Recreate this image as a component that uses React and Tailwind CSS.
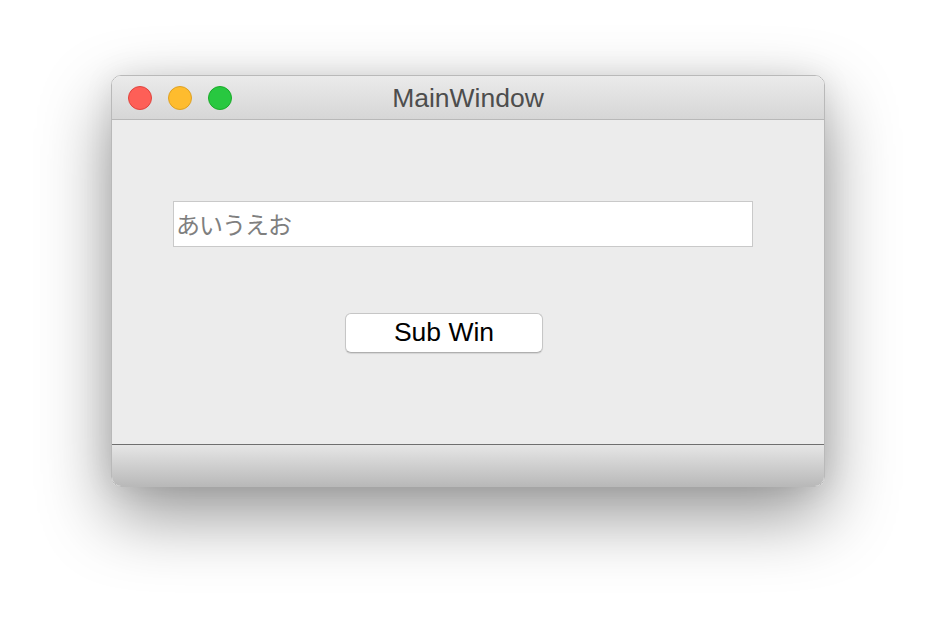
import React from "react";

export default function App() {
  return (
    <div className="w-[936px] h-[634px] bg-white overflow-hidden pt-[75px] pl-[111px]" style={{ fontFamily: '"Liberation Sans", Arial, sans-serif' }}>
      <div className="w-[714px] h-[412px] flex flex-col rounded-[10px] border border-[#b9b9b9] overflow-hidden shadow-[0_28px_70px_rgba(0,0,0,0.42),0_0_30px_rgba(0,0,0,0.08)]">
        {/* Title bar */}
        <div className="relative h-[44px] shrink-0 flex items-center bg-gradient-to-b from-[#ebebeb] to-[#d6d6d6] border-b border-[#b8b8b8]">
          <div className="flex items-center gap-[16px] pl-[16px]">
            <span className="w-[24px] h-[24px] rounded-full bg-[#fe5f57] border border-[#e0443e]" />
            <span className="w-[24px] h-[24px] rounded-full bg-[#febc2e] border border-[#dea123]" />
            <span className="w-[24px] h-[24px] rounded-full bg-[#28c840] border border-[#1aab29]" />
          </div>
          <div className="absolute inset-0 flex items-center justify-center text-[26.5px] text-[#4d4d4d] pt-[2px]">
            MainWindow
          </div>
        </div>
        {/* Content */}
        <div className="flex-1 bg-[#ececec] flex flex-col pl-[61px] pt-[81px]">
          <div className="w-[580px] h-[46px] bg-white border border-[#c9c9c9] flex items-center pl-[2px] text-[24px] tracking-[-1px] text-[#7f7f7f]" style={{ fontFamily: '"Noto Sans CJK JP", "Liberation Sans", sans-serif' }}>
            あいうえお
          </div>
          <div className="ml-[172px] mt-[66px] w-[198px] h-[40px] bg-white rounded-[6px] border border-[#c6c6c6] border-b-[#afafaf] shadow-[0_1px_1px_rgba(0,0,0,0.1)] flex items-center justify-center text-[26.5px] text-black">
            Sub Win
          </div>
        </div>
        {/* Bottom bar */}
        <div className="h-[42px] shrink-0 border-t border-[#6f6f6f] bg-gradient-to-b from-[#e6e6e6] to-[#b9b9b9]" />
      </div>
    </div>
  );
}
